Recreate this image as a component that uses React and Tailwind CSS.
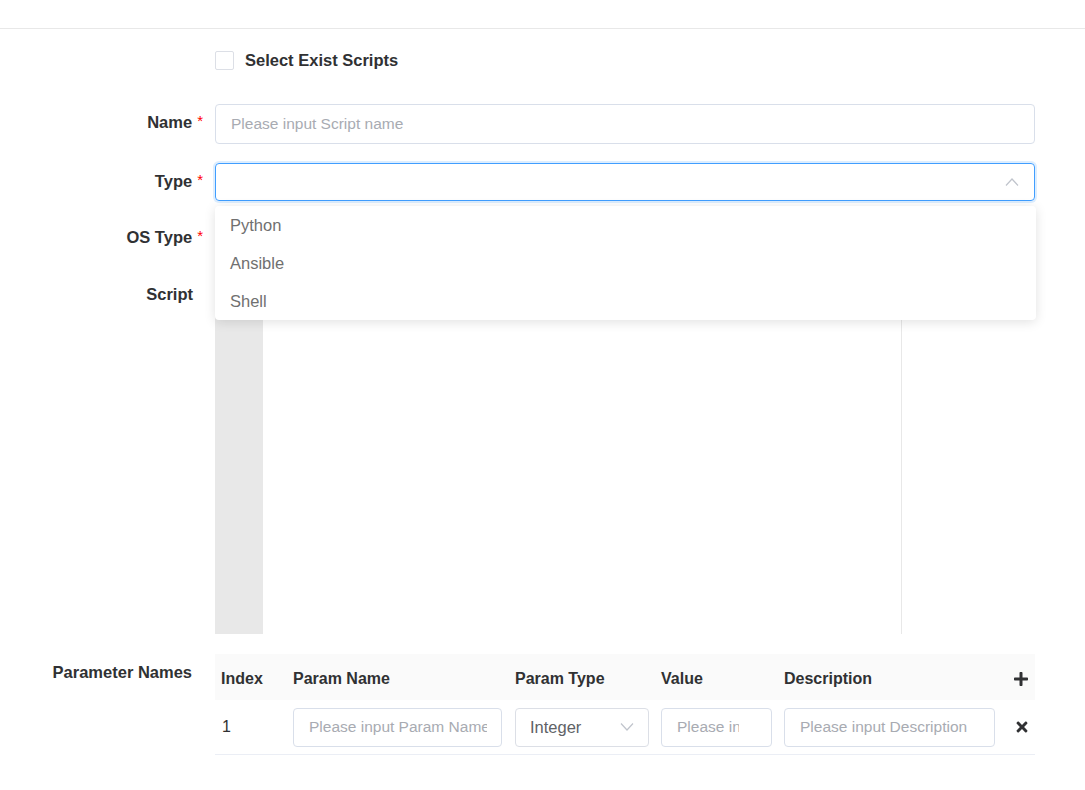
import { FaPlus, FaTimes } from 'react-icons/fa'

const FONT = { fontFamily: '"Liberation Sans", Arial, sans-serif' }

function Chevron({ up }) {
  return (
    <svg width="14" height="8" viewBox="0 0 14 8" fill="none" stroke="#c0c4cc" strokeWidth="1.2">
      {up ? <polyline points="1,7.5 7,1 13,7.5" /> : <polyline points="1,0.5 7,7 13,0.5" />}
    </svg>
  )
}

function Label({ text, required, className = '' }) {
  return (
    <div className={`w-[203px] shrink-0 text-right font-bold text-[16.5px] text-[#303133] ${required ? 'pr-0' : 'pr-[10px]'} ${className}`}>
      {text}
      {required ? <span className="text-[#f00] ml-[5px] text-[15px] font-normal relative top-[-2px]">*</span> : null}
    </div>
  )
}

const INPUT = 'h-full rounded-[4px] border border-[#d9dfea] pl-[15px] text-[15.5px] text-[#606266] placeholder:text-[#a8abb2] outline-none bg-white'

export default function App() {
  return (
    <div className="w-[1085px] h-[790px] bg-white overflow-hidden" style={FONT}>
      <div className="h-[29px] border-b border-[#e8e8e8]" />

      {/* select exist */}
      <div className="flex items-center h-[38px] mt-[12px]">
        <div className="w-[215px] shrink-0" />
        <span className="w-[19px] h-[19px] rounded-[2px] border border-[#dcdfe6] bg-white" />
        <span className="ml-[11px] font-bold text-[16.5px] text-[#303133]">Select Exist Scripts</span>
      </div>

      {/* name */}
      <div className="flex items-center h-[40px] mt-[25px]">
        <Label text="Name" required className="relative top-[-2px]" />
        <input className={`${INPUT} w-[820px] ml-[12px] pr-[15px]`} placeholder="Please input Script name" />
      </div>

      {/* type */}
      <div className="flex items-center h-[38px] mt-[19px] relative">
        <Label text="Type" required className="relative top-[-1px]" />
        <div className="ml-[12px] w-[820px] h-full rounded-[4px] border border-[#409eff] shadow-[0_0_0_2px_rgba(64,158,255,0.18)] flex items-center justify-end pr-[15px]">
          <Chevron up />
        </div>
        <div className="absolute left-[215px] top-[43px] w-[821px] rounded-[4px] bg-white shadow-[0_2px_12px_rgba(0,0,0,0.12)] z-10">
          {['Python', 'Ansible', 'Shell'].map((t) => (
            <div key={t} className="h-[38px] leading-[38px] px-[15px] text-[16.5px] text-[#707070]">{t}</div>
          ))}
        </div>
      </div>

      {/* os type */}
      <div className="flex items-center h-[38px] mt-[17px]">
        <Label text="OS Type" required />
        <div className="ml-[12px] w-[820px] h-full rounded-[4px] border border-[#d9dfea]" />
      </div>

      {/* script */}
      <div className="flex mt-[19px] h-[359px]">
        <Label text="Script" className="leading-[38px]" />
        <div className="ml-[12px] w-[820px] h-full flex">
          <div className="w-[48px] h-full bg-[#e8e8e8]" />
          <div className="w-[639px] h-full border-r border-[#e8e8e8]" />
        </div>
      </div>

      {/* params */}
      <div className="flex mt-[20px]">
        <div className="w-[203px] shrink-0 text-right font-bold text-[16.5px] text-[#303133] pr-[11px] leading-[36px]">Parameter Names</div>
        <div className="ml-[12px] w-[820px] text-[16px]">
          <div className="h-[46px] bg-[#fafafa] flex items-center pt-[3px] font-bold text-[16px] text-[#303133]">
            <div className="w-[72px] pl-[6px]">Index</div>
            <div className="w-[222px] pl-[6px]">Param Name</div>
            <div className="w-[146px] pl-[6px]">Param Type</div>
            <div className="w-[123px] pl-[6px]">Value</div>
            <div className="w-[226px] pl-[6px]">Description</div>
            <div className="flex-1 flex justify-end pr-[6px]"><FaPlus className="w-[16px] h-[16px] text-[#303133]" /></div>
          </div>
          <div className="h-[55px] flex items-center border-b border-[#ebeef5] text-[#606266]">
            <div className="w-[72px] pl-[7px] text-[#303133]">1</div>
            <div className="w-[222px] pl-[6px] h-[39px]">
              <input className={`${INPUT} w-[209px] pr-[14px]`} placeholder="Please input Param Name" />
            </div>
            <div className="w-[146px] pl-[6px] h-[39px]">
              <div className="w-[134px] h-full rounded-[4px] border border-[#dcdfe6] flex items-center justify-between px-[14px] text-[#606266] text-[16.5px]">
                <span>Integer</span>
                <Chevron />
              </div>
            </div>
            <div className="w-[123px] pl-[6px] h-[39px]">
              <input className={`${INPUT} w-[111px] pr-[32px]`} placeholder="Please input Value" />
            </div>
            <div className="w-[226px] pl-[6px] h-[39px]">
              <input className={`${INPUT} w-[211px] pr-[15px]`} placeholder="Please input Description" />
            </div>
            <div className="flex-1 flex justify-end pr-[6px]"><FaTimes className="w-[14px] h-[16px] text-[#303133]" /></div>
          </div>
        </div>
      </div>
    </div>
  )
}
